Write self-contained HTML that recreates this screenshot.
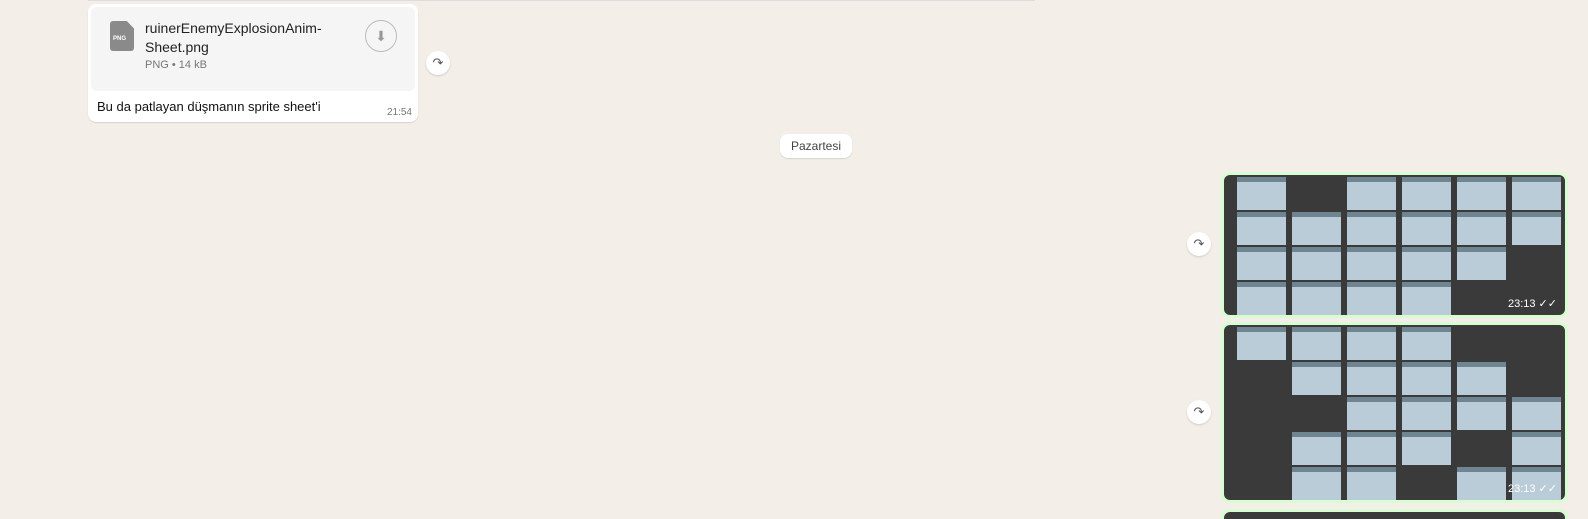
<!DOCTYPE html>
<html style="overflow:hidden"><head><style>
html,body{overflow:hidden;height:519px}
body{margin:0;width:1588px;height:519px;background:#f3efe8;position:relative;font-family:"Liberation Sans",Arial,sans-serif;}
.bub{position:absolute;background:#fff;border-radius:8px;box-shadow:0 1px 1px rgba(0,0,0,.12);}
.fwd{position:absolute;width:24px;height:24px;border-radius:50%;background:#fff;box-shadow:0 1px 2px rgba(0,0,0,.15);color:#555;font-size:13px;text-align:center;line-height:24px;}
.img{position:absolute;background:#d9fdd3;border-radius:8px;}
.in{position:absolute;left:3px;top:3px;right:3px;bottom:3px;background:#3a3a3a;border-radius:6px;overflow:hidden;}
.c{position:absolute;width:49px;height:33px;background:#b9ccd8;border-top:5px solid #6f8592;box-sizing:border-box;}
.t{position:absolute;right:8px;bottom:5px;color:#fff;font-size:11px;}
</style></head><body>
<div style="position:absolute;left:88px;top:0;width:947px;height:1px;background:#ddd"></div>
<div class="bub" style="left:88px;top:4px;width:330px;height:118px">
 <div style="position:absolute;left:3px;top:3px;width:324px;height:84px;background:#f5f5f5;border-radius:6px"></div>
 <div style="position:absolute;left:22px;top:17px;width:24px;height:30px;background:#8a8a8a;border-radius:3px;clip-path:polygon(0 0,70% 0,100% 25%,100% 100%,0 100%)"><span style="position:absolute;left:3px;top:15px;color:#fff;font-size:6px;font-weight:bold">PNG</span></div>
 <div style="position:absolute;left:57px;top:15px;font-size:14px;color:#222;line-height:19px">ruinerEnemyExplosionAnim-<br>Sheet.png</div>
 <div style="position:absolute;left:57px;top:55px;font-size:11px;color:#777">PNG • 14 kB</div>
 <div style="position:absolute;left:277px;top:16px;width:30px;height:30px;border:1px solid #bbb;border-radius:50%;color:#999;text-align:center;line-height:30px;font-size:14px">⬇</div>
 <div style="position:absolute;left:9px;top:95px;font-size:13px;color:#111">Bu da patlayan düşmanın sprite sheet'i</div>
 <div style="position:absolute;right:6px;top:103px;font-size:10px;color:#777">21:54</div>
</div>
<div class="fwd" style="left:426px;top:51px">↷</div>
<div class="bub" style="left:780px;top:134px;width:72px;height:24px;font-size:12px;color:#444;text-align:center;line-height:24px">Pazartesi</div>
<div class="fwd" style="left:1187px;top:232px">↷</div>
<div class="fwd" style="left:1187px;top:400px">↷</div>
<div class="img" style="left:1221px;top:172px;width:347px;height:146px"><div class="in" id="a"><span class="t">23:13 ✓✓</span></div></div>
<div class="img" style="left:1221px;top:322px;width:347px;height:181px"><div class="in" id="b"><span class="t">23:13 ✓✓</span></div></div>
<div style="position:absolute;left:1221px;top:509px;width:347px;height:10px;background:#d9fdd3;border-radius:8px 8px 0 0"><div style="margin:3px 3px 0;height:7px;background:#3a3a3a;border-radius:6px 6px 0 0"></div></div>
<script>
function g(id,rows,rh){var e=document.getElementById(id);rows.forEach(function(r,i){r.forEach(function(c){var d=document.createElement('div');d.className='c';d.style.left=(13+c*55)+'px';d.style.top=(2+i*rh)+'px';d.style.height=(rh-2)+'px';e.insertBefore(d,e.firstChild);});});}
g('a',[[0,2,3,4,5],[0,1,2,3,4,5],[0,1,2,3,4],[0,1,2,3]],35);
g('b',[[0,1,2,3],[1,2,3,4],[2,3,4,5],[1,2,3,5],[1,2,4,5]],35);
</script>
</body></html>
